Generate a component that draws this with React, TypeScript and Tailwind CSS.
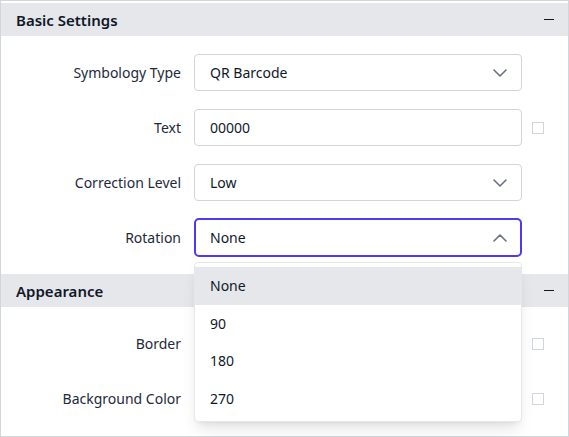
import React from "react";

const font = { fontFamily: '"Noto Sans", "Open Sans", Arial, sans-serif' };

const Chevron = ({ up }: { up?: boolean }) => (
  <svg width="14" height="8" viewBox="0 0 14 8" className="text-gray-500">
    <path
      d={up ? "M1 7l6-6 6 6" : "M1 1l6 6 6-6"}
      fill="none"
      stroke="currentColor"
      strokeWidth="1.6"
      strokeLinecap="round"
      strokeLinejoin="round"
    />
  </svg>
);

const Header = ({ title }: { title: string }) => (
  <div className="flex h-[33px] items-center justify-between bg-gray-200 pl-[15px] pr-[14px]">
    <span className="pt-[1px] text-[15px] font-semibold text-gray-900">{title}</span>
    <span className="block h-[1.5px] w-[10px] bg-gray-900" />
  </div>
);

const Row = ({
  label,
  children,
  check,
}: {
  label: string;
  children?: React.ReactNode;
  check?: boolean;
}) => (
  <div className="flex items-center">
    <div className="w-[180px] text-right text-[14px] text-gray-800">{label}</div>
    <div className="relative ml-[13px] w-[328px]">{children}</div>
    {check && (
      <span className="ml-[10px] block h-[12px] w-[12px] border border-gray-300 bg-white" />
    )}
  </div>
);

const Field = ({ value, chevron }: { value: string; chevron?: boolean }) => (
  <div className="flex h-[37px] items-center justify-between rounded-[4px] border border-gray-300 bg-white pl-[15px] pr-[14px] text-[14px] text-gray-900">
    <span>{value}</span>
    {chevron && <Chevron />}
  </div>
);

export default function App() {
  const options = ["None", "90", "180", "270"];
  return (
    <div style={font} className="h-[437px] w-[569px] bg-white">
      <div className="h-full border border-gray-300 pt-[2px]">
        <Header title="Basic Settings" />
        <div className="flex flex-col gap-[18px] py-[18px]">
          <Row label="Symbology Type">
            <Field value="QR Barcode" chevron />
          </Row>
          <Row label="Text" check>
            <Field value="00000" />
          </Row>
          <Row label="Correction Level">
            <Field value="Low" chevron />
          </Row>
          <Row label="Rotation">
            <div className="-my-[1px] flex h-[39px] items-center justify-between rounded-[5px] border-2 border-indigo-600 bg-white pl-[14px] pr-[13px] text-[14px] text-gray-900">
              <span>None</span>
              <Chevron up />
            </div>
            <div className="absolute left-0 top-[43px] z-10 w-[328px] rounded-[4px] border border-gray-200 bg-white py-[4px] shadow-lg">
              {options.map((o, i) => (
                <div
                  key={o}
                  className={`flex h-[37.5px] items-center pl-[15px] text-[14px] text-gray-900 ${
                    i === 0 ? "bg-gray-200" : ""
                  }`}
                >
                  {o}
                </div>
              ))}
            </div>
          </Row>
        </div>
        <Header title="Appearance" />
        <div className="flex flex-col gap-[18px] py-[18px]">
          <Row label="Border" check>
            <Field value="" />
          </Row>
          <Row label="Background Color" check>
            <Field value="" />
          </Row>
        </div>
      </div>
    </div>
  );
}
